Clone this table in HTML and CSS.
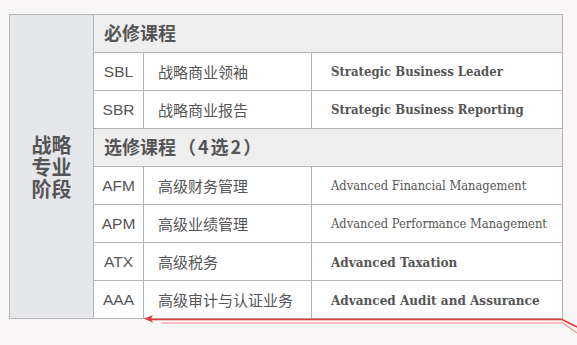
FILE: index.html
```html
<!DOCTYPE html>
<html lang="zh-CN">
<head>
<meta charset="utf-8">
<link rel="stylesheet" href="styles.css">
</head>
<body>
<div class="stage">
  <table class="course">
    <colgroup>
      <col class="c-stage"><col class="c-code"><col class="c-cn"><col class="c-en">
    </colgroup>
    <tr>
      <th class="stage-cell" rowspan="8">战略<br>专业<br>阶段</th>
      <th class="group" colspan="3">必修课程</th>
    </tr>
    <tr><td class="code">SBL</td><td class="cn">战略商业领袖</td><td class="en bold">Strategic Business Leader</td></tr>
    <tr><td class="code">SBR</td><td class="cn">战略商业报告</td><td class="en bold">Strategic Business Reporting</td></tr>
    <tr><th class="group" colspan="3">选修课程<span class="pick">（4选2）</span></th></tr>
    <tr><td class="code">AFM</td><td class="cn">高级财务管理</td><td class="en">Advanced Financial Management</td></tr>
    <tr><td class="code">APM</td><td class="cn">高级业绩管理</td><td class="en">Advanced Performance Management</td></tr>
    <tr><td class="code">ATX</td><td class="cn">高级税务</td><td class="en bold big">Advanced Taxation</td></tr>
    <tr><td class="code">AAA</td><td class="cn">高级审计与认证业务</td><td class="en bold big">Advanced Audit and Assurance</td></tr>
  </table>
  <svg class="marker" width="577" height="345" viewBox="0 0 577 345">
    <polyline points="150,319.5 562,319.5 577,327" fill="none" stroke="#e23b3b" stroke-width="1.6"/>
    <polyline points="162,323 563,323 577,333" fill="none" stroke="#f08c8c" stroke-width="1.2"/>
    <path d="M144,318.8 L153,315 L151,318.8 L153,322.6 Z" fill="#e23b3b"/>
  </svg>
</div>
</body>
</html>
```
FILE: styles.css
```css
html, body {
  margin: 0;
  padding: 0;
}
body {
  width: 577px;
  height: 345px;
  background: #f8f6f6;
  overflow: hidden;
  font-family: "Noto Sans CJK SC", "Noto Sans", sans-serif;
  color: #555;
}
.stage {
  position: relative;
  width: 577px;
  height: 345px;
  padding: 14px 0 0 9px;
  box-sizing: border-box;
}
.course {
  border-collapse: collapse;
  table-layout: fixed;
  width: 553px;
  border: 1px solid #a6a6a6;
}
.c-stage { width: 84px; }
.c-code { width: 50px; }
.c-cn { width: 168px; }
.c-en { width: 251px; }
.course tr { height: 38px; }
.course th, .course td {
  border: 1px solid #b4b4b4;
  padding: 0;
  height: 37px;
  box-sizing: border-box;
}
.stage-cell {
  background: #e6e7ea;
  font-size: 20px;
  line-height: 22px;
  font-weight: 700;
  text-align: center;
  vertical-align: middle;
  color: #555;
}
.group {
  background: #eeeeef;
  font-size: 18px;
  font-weight: 700;
  text-align: left;
  padding: 0 0 3px 10px !important;
  color: #555;
}
.pick {
  letter-spacing: 2px;
  margin-left: 2px;
}
.code {
  background: #fff;
  text-align: center;
  font-family: "Liberation Sans", Arial, sans-serif;
  font-size: 15.5px;
  color: #555;
}
.cn {
  background: #fff;
  padding-left: 14px !important;
  font-size: 15px;
  color: #555;
}
.en {
  background: #fff;
  padding-left: 19px !important;
  font-family: "DejaVu Serif", serif;
  font-stretch: condensed;
  font-size: 12.8px;
  color: #555;
  white-space: nowrap;
}
.en.bold { font-weight: 700; font-size: 13px; }
.en.big { font-size: 13.4px; }
.marker {
  position: absolute;
  left: 0;
  top: 0;
  pointer-events: none;
}
```
